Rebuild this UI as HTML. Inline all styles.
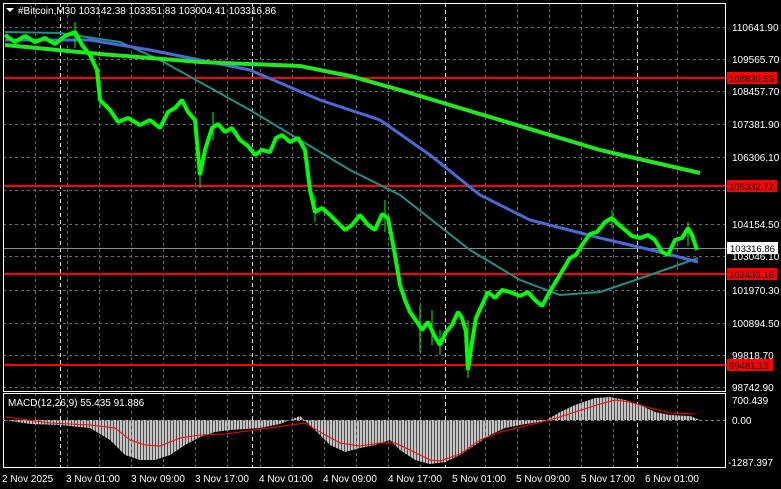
<!DOCTYPE html>
<html><head><meta charset="utf-8"><style>
html,body{margin:0;padding:0;background:#000;width:781px;height:489px;overflow:hidden}
svg{display:block}
text{font-family:"Liberation Sans",sans-serif;font-size:10px;fill:#fff}
</style></head><body>
<svg width="781" height="489" viewBox="0 0 781 489" xmlns="http://www.w3.org/2000/svg">
<defs>
<pattern id="st" width="3" height="10" patternUnits="userSpaceOnUse"><rect x="0" y="0" width="2.4" height="10" fill="#c4c4c4"/></pattern>
</defs>
<g stroke="#6a6a6a" stroke-dasharray="3,3" stroke-width="1">
<line x1="3" x2="725" y1="27.5" y2="27.5"/><line x1="3" x2="725" y1="59.5" y2="59.5"/>
<line x1="3" x2="725" y1="91.5" y2="91.5"/><line x1="3" x2="725" y1="124.5" y2="124.5"/>
<line x1="3" x2="725" y1="157.5" y2="157.5"/><line x1="3" x2="725" y1="190.5" y2="190.5"/>
<line x1="3" x2="725" y1="224.5" y2="224.5"/><line x1="3" x2="725" y1="256.5" y2="256.5"/>
<line x1="3" x2="725" y1="290.5" y2="290.5"/><line x1="3" x2="725" y1="323.5" y2="323.5"/>
<line x1="3" x2="725" y1="355.5" y2="355.5"/><line x1="3" x2="725" y1="387.5" y2="387.5"/>
<path d="M35.5 3V468M67.5 3V468M99.5 3V468M131.5 3V468M163.5 3V468M195.5 3V468M227.5 3V468M260.5 3V468M292.5 3V468M324.5 3V468M356.5 3V468M388.5 3V468M420.5 3V468M485.5 3V468M517.5 3V468M549.5 3V468M581.5 3V468M613.5 3V468M677.5 3V468"/>
</g>
<g stroke="#ddd" stroke-dasharray="4,3" stroke-width="1">
<path d="M60.5 3V468M252.5 3V468M445.5 3V468M637.5 3V468"/>
</g>
<g stroke="#ff0000" stroke-width="2">
<line x1="3" x2="727" y1="78" y2="78"/><line x1="3" x2="727" y1="186" y2="186"/>
<line x1="3" x2="727" y1="274" y2="274"/><line x1="3" x2="727" y1="365" y2="365"/>
</g>
<line x1="3" x2="727" y1="248.5" y2="248.5" stroke="#8090a0" stroke-width="1"/>
<polyline fill="none" stroke="#1f8f8a" stroke-width="2" points="5,32 60,33 120,42 160,60 250,110 350,170 400,195 470,250 520,280 560,295 600,292 650,275 698,258"/>
<polyline fill="none" stroke="#4a6ad8" stroke-width="3" points="5,40 90,40 150,50 250,70 320,100 380,120 430,155 480,195 530,220 600,238 660,252 698,262"/>
<polyline fill="none" stroke="#22e822" stroke-width="4" points="5,45 100,54 200,62 300,66 350,76 400,90 500,120 600,150 700,173"/>
<polyline fill="none" stroke="#00ff00" stroke-width="4" stroke-linejoin="bevel" points="5,35 15,42 25,36 35,42 45,38 55,44 65,36 75,32 82,45 90,55 97,70 100,100 110,110 118,122 128,118 140,125 150,120 160,128 168,112 175,108 182,100 188,112 195,120 200,175 205,150 212,128 218,124 225,132 232,128 240,140 248,146 255,155 262,150 270,152 276,138 282,135 290,142 298,138 305,150 310,190 315,212 322,208 330,215 337,222 345,230 352,225 360,215 368,225 375,230 382,214 388,218 395,255 400,285 405,300 410,312 417,322 422,330 428,322 434,335 440,345 446,332 452,325 458,312 462,318 466,332 468,370 472,342 476,318 482,305 488,292 495,298 502,290 510,292 520,296 528,292 535,300 542,306 548,295 552,288 558,278 564,268 570,258 576,255 582,245 590,234 597,232 605,222 612,218 618,224 625,230 632,236 640,238 648,235 655,240 662,252 668,255 675,240 682,238 688,228 692,235 697,250"/>
<g stroke="#00ff00" stroke-width="1">
<path d="M75 22V48M100 80V108M200 165V188M213 112V140M315 195V222M385 200V232M420 305V352M432 310V345M468 320V378M440 330V355M612 210V228M688 222V246"/>
</g>
<rect x="3.5" y="3.5" width="722" height="388" fill="none" stroke="#fff" stroke-width="1"/>
<rect x="3.5" y="393.5" width="722" height="74" fill="none" stroke="#fff" stroke-width="1"/>
<polygon fill="url(#st)" points="5,420 30,424 60,425 90,428 110,440 125,455 140,460 155,460 170,455 185,445 200,437 215,432 230,430 260,428 280,424 300,416 315,430 330,445 345,452 360,448 375,445 390,440 400,450 415,460 430,464 445,462 460,455 475,445 490,435 505,428 520,425 545,421 560,412 575,405 595,398 610,397 625,400 640,405 655,412 670,415 690,416 700,420 5,420"/>
<line x1="3" x2="725" y1="420.5" y2="420.5" stroke="#888" stroke-dasharray="3,3"/>
<polyline fill="none" stroke="#ff0000" stroke-width="1" points="5,417 50,423 90,425 115,428 130,440 145,445 160,446 180,438 200,435 225,434 255,430 290,425 305,423 320,432 340,443 360,446 380,443 395,443 410,450 430,460 440,461 460,454 480,440 500,432 525,426 550,420 575,412 600,404 615,400 630,402 650,408 670,413 695,414"/>
<text x="8" y="406">MACD(12,26,9) 55.435 91.886</text>
<polygon points="6,8 14,8 10,12" fill="#fff"/>
<text x="18" y="14">#Bitcoin,M30  103142.38 103351.83 103004.41 103316.86</text>
<g>
<text x="732" y="31">110641.90</text><text x="732" y="63">109565.70</text>
<text x="732" y="95">108457.70</text><text x="732" y="128">107381.90</text>
<text x="732" y="161">106306.10</text><text x="732" y="228">104154.50</text>
<text x="732" y="260">103046.10</text><text x="732" y="294">101970.30</text>
<text x="732" y="327">100894.50</text><text x="732" y="359">99818.70</text>
<text x="732" y="391">98742.90</text>
</g>
<rect x="727" y="72" width="50" height="12" fill="#ff0000"/><text x="729" y="82" style="fill:#000;font-size:9.5px">108830.55</text>
<rect x="727" y="180" width="50" height="12" fill="#ff0000"/><text x="729" y="190" style="fill:#000;font-size:9.5px">105332.72</text>
<rect x="727" y="242" width="51" height="12" fill="#fff"/><text x="730" y="252" style="fill:#000;font-size:9.5px">103316.86</text>
<rect x="727" y="268" width="50" height="12" fill="#ff0000"/><text x="729" y="278" style="fill:#000;font-size:9.5px">102433.16</text>
<rect x="727" y="359" width="46" height="12" fill="#ff0000"/><text x="729" y="369" style="fill:#000;font-size:9.5px">99481.13</text>
<text x="732" y="404">700.439</text><text x="732" y="424">0.00</text><text x="728" y="466">-1287.397</text>
<g>
<text x="2" y="482">2 Nov 2025</text><text x="66" y="482">3 Nov 01:00</text>
<text x="131" y="482">3 Nov 09:00</text><text x="195" y="482">3 Nov 17:00</text>
<text x="259" y="482">4 Nov 01:00</text><text x="323" y="482">4 Nov 09:00</text>
<text x="388" y="482">4 Nov 17:00</text><text x="452" y="482">5 Nov 01:00</text>
<text x="516" y="482">5 Nov 09:00</text><text x="581" y="482">5 Nov 17:00</text>
<text x="645" y="482">6 Nov 01:00</text>
</g>
</svg>
</body></html>
